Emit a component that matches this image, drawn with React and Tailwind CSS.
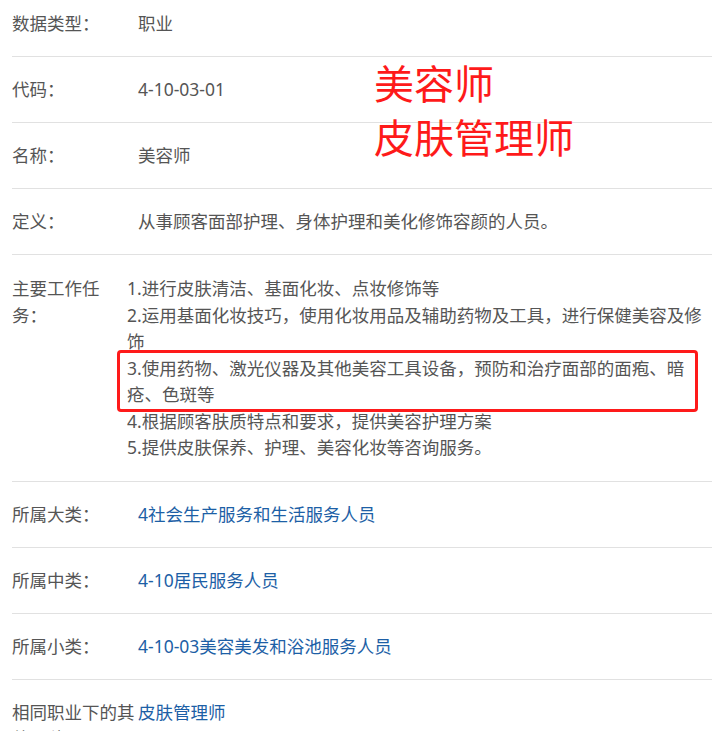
import React from 'react';

const font = { fontFamily: '"Noto Sans", "Noto Sans CJK SC", sans-serif' };

function Row({ label, children, link }) {
  return (
    <div className="flex h-[66px] items-center border-b border-[#e1e1e1]">
      <div className="w-[126px] shrink-0 text-[#555]">{label}</div>
      <div className={link ? 'text-[#1d5fa6]' : 'text-[#555]'}>{children}</div>
    </div>
  );
}

const tasks = [
  '1.进行皮肤清洁、基面化妆、点妆修饰等',
  '2.运用基面化妆技巧，使用化妆用品及辅助药物及工具，进行保健美容及修饰',
  '3.使用药物、激光仪器及其他美容工具设备，预防和治疗面部的面疱、暗疮、色斑等',
  '4.根据顾客肤质特点和要求，提供美容护理方案',
  '5.提供皮肤保养、护理、美容化妆等咨询服务。',
];

export default function App() {
  return (
    <div className="relative w-[720px] h-[731px] overflow-hidden bg-white text-[17.5px]" style={font}>
      <div className="-mt-[9px] ml-[12px] w-[700px]">
        <Row label="数据类型：">职业</Row>
        <Row label="代码：">4-10-03-01</Row>
        <Row label="名称：">美容师</Row>
        <Row label="定义：">从事顾客面部护理、身体护理和美化修饰容颜的人员。</Row>

        {/* 主要工作任务 */}
        <div className="flex border-b border-[#e1e1e1] pt-[20px] pb-[20px] leading-[26.5px]">
          <div className="w-[100px] shrink-0 text-[#555]">主要工作任务：</div>
          <div className="ml-[15px] w-[585px] text-[#555]">
            {tasks.map((t) => (
              <div key={t}>{t}</div>
            ))}
          </div>
        </div>

        <Row label="所属大类：" link>4社会生产服务和生活服务人员</Row>
        <Row label="所属中类：" link>4-10居民服务人员</Row>
        <Row label="所属小类：" link>4-10-03美容美发和浴池服务人员</Row>

        <div className="flex pt-[19px] leading-[26.5px]">
          <div className="w-[126px] shrink-0 text-[#555]">相同职业下的其他工种：</div>
          <div className="text-[#1d5fa6]">皮肤管理师</div>
        </div>
      </div>

      {/* annotations */}
      <div className="absolute left-[117px] top-[350px] h-[62px] w-[581px] rounded-[4px] border-[3px] border-[#fe1a1a]"></div>
      <div className="absolute left-[374px] top-[57px] text-[40px] leading-[54px] text-[#fe1a1a]">
        <div>美容师</div>
        <div>皮肤管理师</div>
      </div>
    </div>
  );
}
